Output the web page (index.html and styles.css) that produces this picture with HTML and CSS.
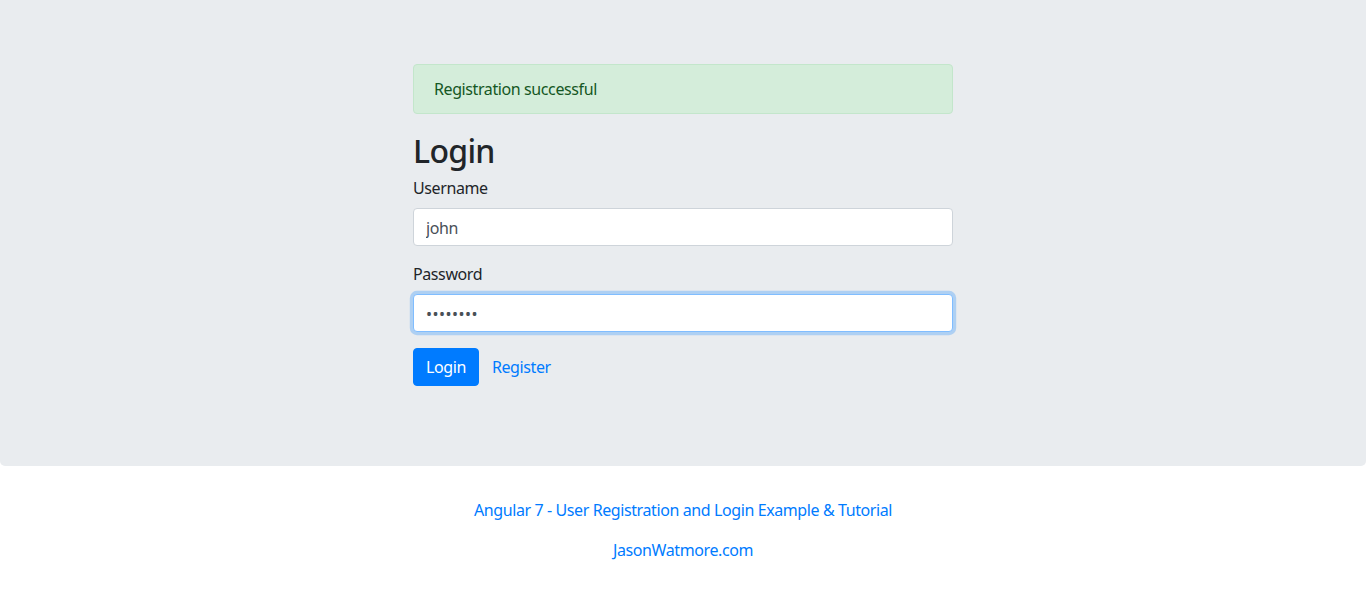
FILE: index.html
```html
<!DOCTYPE html>
<html lang="en">
<head>
<meta charset="utf-8">
<title>Angular 7 - User Registration and Login Example</title>
<link rel="stylesheet" href="styles.css">
</head>
<body>
<div class="jumbotron">
  <div class="col">
    <div class="alert">Registration successful</div>
    <h2 class="title">Login</h2>
    <form class="form">
      <div class="form-group">
        <label class="label" for="username">Username</label>
        <input class="input" id="username" type="text" value="john">
      </div>
      <div class="form-group">
        <label class="label" for="password">Password</label>
        <input class="input input-focus input-password" id="password" type="password" value="password">
      </div>
      <div class="form-group actions">
        <button class="btn btn-primary" type="button">Login</button>
        <a class="btn btn-link" href="#">Register</a>
      </div>
    </form>
  </div>
</div>
<div class="credits">
  <p><a href="#">Angular 7 - User Registration and Login Example &amp; Tutorial</a></p>
  <p><a href="#">JasonWatmore.com</a></p>
</div>
</body>
</html>
```

FILE: styles.css
```css
* { box-sizing: border-box; }
html, body { margin: 0; padding: 0; }
body {
  font-family: "Noto Sans", "Open Sans", sans-serif;
  font-size: 16px;
  line-height: 1.5;
  letter-spacing: -0.4px;
  color: #212529;
  background: #fff;
}
.jumbotron {
  background: #e9ecef;
  padding: 64px 32px;
  margin-bottom: 32px;
  border-radius: 0 0 5px 5px;
}
.col {
  width: 540px;
  margin: 0 auto;
}
.alert {
  background: #d4edda;
  border: 1px solid #c3e6cb;
  color: #155724;
  border-radius: 4px;
  padding: 12px 20px;
  margin-bottom: 16px;
}
.title {
  font-size: 32px;
  font-weight: 500;
  line-height: 1.2;
  letter-spacing: -0.7px;
  margin: 0 0 8px;
  padding-top: 2px;
  height: 38.4px;
}
.form { margin: 0; }
.form-group { margin-bottom: 16px; }
.label {
  display: block;
  margin-bottom: 8px;
}
.input {
  display: block;
  width: 100%;
  height: 38px;
  padding: 7px 12px 5px;
  font: inherit;
  letter-spacing: -0.4px;
  color: #495057;
  background: #fff;
  border: 1px solid #ced4da;
  border-radius: 4px;
  outline: none;
}
.input-password { letter-spacing: 0.5px; }
.input-focus {
  border-color: #80bdff;
  box-shadow: 0 0 0 3.2px rgba(0, 123, 255, 0.25);
}
.actions { display: flex; align-items: center; gap: 0; }
.btn {
  display: inline-block;
  font: inherit;
  letter-spacing: -0.4px;
  line-height: 24px;
  padding: 6px 12px;
  border: 1px solid transparent;
  border-radius: 4px;
  text-decoration: none;
  cursor: pointer;
}
.btn-primary {
  color: #fff;
  background: #007bff;
  border-color: #007bff;
}
.btn-link {
  color: #007bff;
  background: transparent;
}
.credits {
  text-align: center;
}
.credits p { margin: 0 0 16px; }
.credits a { color: #007bff; text-decoration: none; }
```
